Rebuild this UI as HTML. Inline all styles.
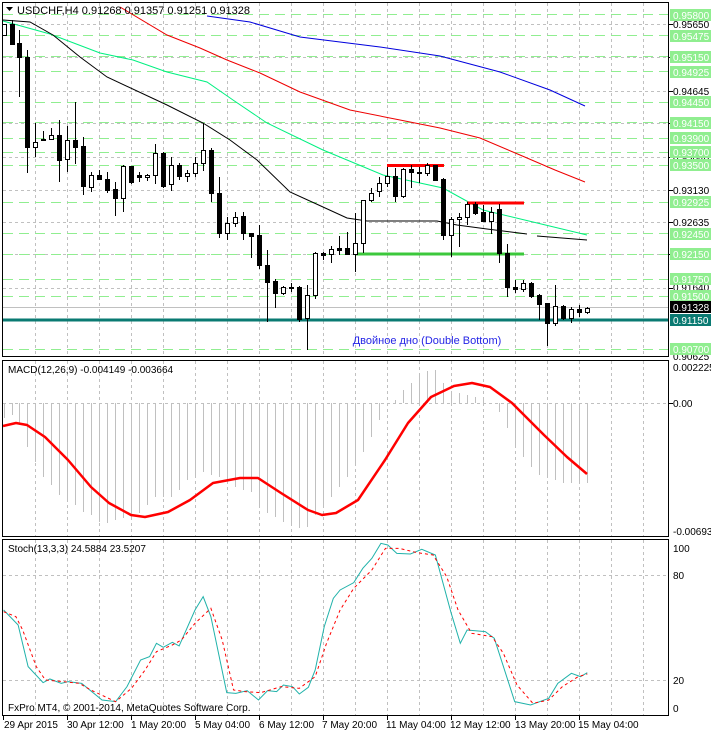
<!DOCTYPE html>
<html><head><meta charset="utf-8"><style>
html,body{margin:0;padding:0;background:#fff;}
svg{display:block;font-family:"Liberation Sans",sans-serif;font-size:11px;}
</style></head><body>
<svg width="711" height="733" viewBox="0 0 711 733" xmlns="http://www.w3.org/2000/svg">
<rect width="711" height="733" fill="#fff"/>
<g stroke="#c0c0c0" stroke-dasharray="3,3" shape-rendering="crispEdges">
<path d="M35.5 3V356M67.5 3V356M99.5 3V356M131.5 3V356M163.5 3V356M195.5 3V356M227.5 3V356M259.5 3V356M291.5 3V356M323.5 3V356M355.5 3V356M387.5 3V356M419.5 3V356M451.5 3V356M483.5 3V356M515.5 3V356M547.5 3V356M579.5 3V356M611.5 3V356M643.5 3V356"/>
<path d="M35.5 361V537M67.5 361V537M99.5 361V537M131.5 361V537M163.5 361V537M195.5 361V537M227.5 361V537M259.5 361V537M291.5 361V537M323.5 361V537M355.5 361V537M387.5 361V537M419.5 361V537M451.5 361V537M483.5 361V537M515.5 361V537M547.5 361V537M579.5 361V537M611.5 361V537M643.5 361V537"/>
<path d="M35.5 540V715M67.5 540V715M99.5 540V715M131.5 540V715M163.5 540V715M195.5 540V715M227.5 540V715M259.5 540V715M291.5 540V715M323.5 540V715M355.5 540V715M387.5 540V715M419.5 540V715M451.5 540V715M483.5 540V715M515.5 540V715M547.5 540V715M579.5 540V715M611.5 540V715M643.5 540V715"/>
<path d="M3 24.5H669M3 57.5H669M3 91.5H669M3 123.5H669M3 157.5H669M3 190.5H669M3 222.5H669M3 254.5H669M3 288.5H669"/>
<path d="M3 403.5H669M3 575.5H669M3 680.5H669"/>
</g>
<g stroke="#90ee90" stroke-dasharray="10,6" shape-rendering="crispEdges">
<path d="M3 14.5H669M3 35.5H669M3 56.5H669M3 71.5H669M3 102.5H669M3 122.5H669M3 138.5H669M3 152.5H669M3 165.5H669M3 202.5H669M3 233.5H669M3 254.5H669M3 279.5H669M3 296.5H669M3 349.5H669"/>
</g>
<path d="M3 307.5H669" stroke="#c0c0c0" shape-rendering="crispEdges"/>
<g fill="none" stroke-width="1">
<polyline stroke="#0000dd" points="207,16 250,22 300,37 380,47 440,56 500,72 550,90 585,106"/>
<polyline stroke="#ee0000" points="120,7 167,35 200,48 227,60 260,73 300,92 350,110 400,120 440,128 480,138 520,155 555,170 585,182"/>
<polyline stroke="#00f080" points="3,21 50,34 100,53 133,60 167,72 207,82 233,100 267,123 323,150 383,175 443,188 483,210 533,222 587,235"/>
<polyline stroke="#000" points="3,20 30,22 53,35 80,57 107,77 167,105 203,123 230,140 257,160 290,192 323,207 347,218 367,221 437,221 457,225 487,229 527,234"/>
<polyline stroke="#000" points="537,236 587,240"/>
</g>
<path d="M3 320H669" stroke="#0a7a72" stroke-width="3"/>
<path d="M387 165.5H444" stroke="#ff0000" stroke-width="3"/>
<path d="M467 203H524" stroke="#ff0000" stroke-width="3"/>
<path d="M355 254H524" stroke="#3cc83c" stroke-width="3"/>
<g stroke="#000" shape-rendering="crispEdges">
<path d="M4.5 24V35M12.5 20V44M19.5 30V97M27.5 50V173M35.5 123V157M43.5 131V140M51.5 128V140M59.5 120V182M67.5 126V172M75.5 102V164M83.5 137V195M91.5 172V192M99.5 170V180M107.5 172V193M115.5 182V216M123.5 165V212M131.5 166V184M139.5 172V182M147.5 174V181M155.5 144V184M163.5 152V188M171.5 157V191M179.5 163V180M187.5 170V182M195.5 157V177M203.5 123V171M211.5 148V202M219.5 177V238M227.5 217V240M235.5 212V227M243.5 212V240M251.5 233V258M259.5 225V269M267.5 250V322M275.5 279V308M283.5 286V295M291.5 283V292M299.5 286V322M307.5 285V350M315.5 252V299M323.5 252V260M331.5 246V263M339.5 236V255M347.5 232V255M355.5 213V272M363.5 200V253M371.5 188V202M379.5 177V197M387.5 167V187M395.5 168V202M403.5 168V198M411.5 165V188M419.5 167V183M427.5 163V176M435.5 165V181M443.5 178V240M451.5 217V257M459.5 213V247M467.5 202V225M475.5 202V215M483.5 205V222M491.5 207V234M499.5 204V263M507.5 244V297M515.5 280V293M523.5 280V292M531.5 282V298M539.5 294V320M547.5 303V346M555.5 285V326M563.5 305V320M571.5 307V323M579.5 305V317M587.5 307V314"/>
<g fill="#fff">
<rect x="2.5" y="24.5" width="4" height="11"/><rect x="33.5" y="142.5" width="4" height="5"/><rect x="49.5" y="135.5" width="4" height="4"/><rect x="65.5" y="140.5" width="4" height="19"/><rect x="89.5" y="175.5" width="4" height="12"/><rect x="121.5" y="166.5" width="4" height="32"/><rect x="145.5" y="175.5" width="4" height="2"/><rect x="153.5" y="153.5" width="4" height="22"/><rect x="169.5" y="165.5" width="4" height="19"/><rect x="185.5" y="173.5" width="4" height="3"/><rect x="193.5" y="163.5" width="4" height="10"/><rect x="201.5" y="150.5" width="4" height="13"/><rect x="225.5" y="223.5" width="4" height="10"/><rect x="233.5" y="217.5" width="4" height="6"/><rect x="281.5" y="287.5" width="4" height="6"/><rect x="305.5" y="295.5" width="4" height="23"/><rect x="313.5" y="253.5" width="4" height="42"/><rect x="329.5" y="249.5" width="4" height="5"/><rect x="353.5" y="243.5" width="4" height="11"/><rect x="361.5" y="200.5" width="4" height="43"/><rect x="369.5" y="193.5" width="4" height="7"/><rect x="377.5" y="183.5" width="4" height="8"/><rect x="385.5" y="176.5" width="4" height="7"/><rect x="401.5" y="169.5" width="4" height="27"/><rect x="425.5" y="165.5" width="4" height="8"/><rect x="449.5" y="219.5" width="4" height="16"/><rect x="457.5" y="217.5" width="4" height="2"/><rect x="465.5" y="204.5" width="4" height="13"/><rect x="489.5" y="212.5" width="4" height="9"/><rect x="521.5" y="283.5" width="4" height="6"/><rect x="553.5" y="306.5" width="4" height="17"/><rect x="569.5" y="309.5" width="4" height="9"/><rect x="585.5" y="308.5" width="4" height="4"/>
</g>
<g fill="#000">
<rect x="10.5" y="24.5" width="4" height="20"/><rect x="17.5" y="43.5" width="4" height="14"/><rect x="25.5" y="57.5" width="4" height="90"/><rect x="41.5" y="139.5" width="4" height="1"/><rect x="57.5" y="135.5" width="4" height="25"/><rect x="73.5" y="140.5" width="4" height="7"/><rect x="81.5" y="146.5" width="4" height="40"/><rect x="97.5" y="175.5" width="4" height="4"/><rect x="105.5" y="179.5" width="4" height="11"/><rect x="113.5" y="189.5" width="4" height="9"/><rect x="129.5" y="166.5" width="4" height="16"/><rect x="137.5" y="175.5" width="4" height="2"/><rect x="161.5" y="153.5" width="4" height="33"/><rect x="177.5" y="165.5" width="4" height="11"/><rect x="209.5" y="150.5" width="4" height="43"/><rect x="217.5" y="193.5" width="4" height="40"/><rect x="241.5" y="216.5" width="4" height="17"/><rect x="249.5" y="233.5" width="4" height="3"/><rect x="257.5" y="235.5" width="4" height="30"/><rect x="265.5" y="265.5" width="4" height="17"/><rect x="273.5" y="281.5" width="4" height="12"/><rect x="289.5" y="287.5" width="4" height="1"/><rect x="297.5" y="287.5" width="4" height="32"/><rect x="321.5" y="253.5" width="4" height="2"/><rect x="337.5" y="248.5" width="4" height="2"/><rect x="345.5" y="248.5" width="4" height="6"/><rect x="393.5" y="176.5" width="4" height="20"/><rect x="409.5" y="169.5" width="4" height="3"/><rect x="417.5" y="172.5" width="4" height="1"/><rect x="433.5" y="165.5" width="4" height="15"/><rect x="441.5" y="179.5" width="4" height="56"/><rect x="473.5" y="204.5" width="4" height="9"/><rect x="481.5" y="212.5" width="4" height="9"/><rect x="497.5" y="209.5" width="4" height="44"/><rect x="505.5" y="253.5" width="4" height="34"/><rect x="513.5" y="287.5" width="4" height="2"/><rect x="529.5" y="283.5" width="4" height="13"/><rect x="537.5" y="295.5" width="4" height="9"/><rect x="545.5" y="303.5" width="4" height="20"/><rect x="561.5" y="306.5" width="4" height="12"/><rect x="577.5" y="309.5" width="4" height="3"/>
</g>
</g>
<text x="427" y="344" fill="#2424e6" text-anchor="middle">Двойное дно (Double Bottom)</text>
<path d="M6 7h7l-3.5 4z" fill="#000"/>
<text x="17" y="14" fill="#000">USDCHF,H4  0.91268 0.91357 0.91251 0.91328</text>
<g stroke="#c0c0c0" shape-rendering="crispEdges">
<path d="M4.5 403V418M12.5 403V415M19.5 403V425M27.5 403V447M35.5 403V462M43.5 403V477M51.5 403V485M59.5 403V495M67.5 403V500M75.5 403V505M83.5 403V512M91.5 403V515M99.5 403V522M107.5 403V523M115.5 403V520M123.5 403V518M131.5 403V517M139.5 403V513M147.5 403V505M155.5 403V497M163.5 403V497M171.5 403V497M179.5 403V490M187.5 403V480M195.5 403V475M203.5 403V472M211.5 403V475M219.5 403V477M227.5 403V482M235.5 403V487M243.5 403V490M251.5 403V492M259.5 403V505M267.5 403V513M275.5 403V517M283.5 403V522M291.5 403V526M299.5 403V528M307.5 403V527M315.5 403V515M323.5 403V507M331.5 403V497M339.5 403V487M347.5 403V477M355.5 403V465M363.5 403V452M371.5 403V437M379.5 403V420M387.5 403V406M395.5 403V400M403.5 403V390M411.5 403V383M419.5 403V375M427.5 403V371M435.5 403V370M443.5 403V383M451.5 403V393M459.5 403V393M467.5 403V395M475.5 403V397M483.5 403V400M491.5 403V404M499.5 403V412M507.5 403V428M515.5 403V448M523.5 403V457M531.5 403V467M539.5 403V475M547.5 403V478M555.5 403V480M563.5 403V483M571.5 403V483M579.5 403V483M587.5 403V483"/>
</g>
<polyline fill="none" stroke="#ff0000" stroke-width="2.5" stroke-linejoin="round" points="3,426 16,423 27,425 45,437 68,460 91,487 109,503 131,515 145,517 168,512 190,500 213,483 240,478 258,478 281,493 308,510 322,515 336,513 358,500 385,460 408,423 431,397 454,386 472,383 490,387 512,403 544,435 567,457 587,474"/>
<text x="8" y="373" fill="#000" font-size="10">MACD(12,26,9) -0.004149 -0.003664</text>
<g transform="translate(0,530) scale(0.4535,0.3333)" fill="none">
<polyline vector-effect="non-scaling-stroke" stroke="#20b2aa" stroke-width="1" points="8,240 40,285 62,410 95,458 110,447 135,460 150,455 180,460 225,510 255,515 280,470 310,390 330,380 345,340 360,352 380,337 395,348 430,240 448,200 465,260 500,488 520,490 545,482 570,510 590,482 610,485 625,465 645,470 660,492 680,472 695,420 715,290 735,205 750,180 780,158 800,115 820,85 840,40 855,45 875,70 905,72 930,58 960,75 995,250 1015,340 1030,300 1070,305 1090,325 1135,515 1170,525 1210,505 1230,460 1260,430 1280,440 1295,428"/>
<polyline vector-effect="non-scaling-stroke" stroke="#ff0000" stroke-width="1" stroke-dasharray="3,3" points="8,245 35,260 50,300 80,410 100,450 140,455 175,460 200,480 255,515 290,475 320,420 345,365 380,345 400,330 430,280 465,235 490,330 515,480 540,485 575,488 620,470 660,475 695,440 720,340 750,240 780,175 820,120 850,55 880,55 920,68 955,75 985,140 1010,240 1040,310 1085,320 1110,370 1140,465 1175,520 1210,510 1240,470 1275,440 1295,432"/>
</g>
<text x="8" y="552" fill="#000" font-size="10">Stoch(13,3,3) 24.5884 23.5207</text>
<text x="8" y="711" fill="#000" font-size="10">FxPro MT4, © 2001-2014, MetaQuotes Software Corp.</text>
<g fill="none" stroke="#000" shape-rendering="crispEdges">
<rect x="2.5" y="2.5" width="666" height="354"/>
<rect x="2.5" y="360.5" width="666" height="176"/>
<rect x="2.5" y="539.5" width="666" height="176"/>
<path d="M3.5 716V720M67.5 716V720M131.5 716V720M195.5 716V720M259.5 716V720M323.5 716V720M387.5 716V720M451.5 716V720M515.5 716V720M579.5 716V720"/>
<path d="M669 24.5H673M669 57.5H673M669 91.5H673M669 123.5H673M669 157.5H673M669 190.5H673M669 222.5H673M669 254.5H673M669 288.5H673M669 403.5H673"/>
</g>
<g font-size="10">
<text x="673" y="28" fill="#000">0.95650</text>
<text x="673" y="95" fill="#000">0.94645</text>
<text x="673" y="161" fill="#000">0.93640</text>
<text x="673" y="194" fill="#000">0.93130</text>
<text x="673" y="226" fill="#000">0.92635</text>
<text x="673" y="291" fill="#000">0.91640</text>
<text x="673" y="360" fill="#000">0.90625</text>
<g fill="#90ee90">
<rect x="670" y="9" width="41" height="12"/><rect x="670" y="30" width="41" height="12"/><rect x="670" y="51" width="41" height="12"/><rect x="670" y="66" width="41" height="12"/><rect x="670" y="96" width="41" height="12"/><rect x="670" y="117" width="41" height="12"/><rect x="670" y="132" width="41" height="12"/><rect x="670" y="146" width="41" height="12"/><rect x="670" y="159" width="41" height="12"/><rect x="670" y="196" width="41" height="12"/><rect x="670" y="228" width="41" height="12"/><rect x="670" y="248" width="41" height="12"/><rect x="670" y="273" width="41" height="12"/><rect x="670" y="290" width="41" height="12"/><rect x="670" y="343" width="41" height="12"/>
</g>
<rect x="670" y="301" width="41" height="12" fill="#000"/>
<rect x="670" y="314" width="41" height="12" fill="#0a7a72"/>
<g fill="#fff">
<text x="673" y="19">0.95800</text><text x="673" y="40">0.95475</text><text x="673" y="61">0.95150</text><text x="673" y="76">0.94925</text><text x="673" y="106">0.94450</text><text x="673" y="127">0.94150</text><text x="673" y="142">0.93900</text><text x="673" y="156">0.93700</text><text x="673" y="169">0.93500</text><text x="673" y="206">0.92925</text><text x="673" y="238">0.92450</text><text x="673" y="258">0.92150</text><text x="673" y="283">0.91750</text><text x="673" y="300">0.91500</text><text x="673" y="311">0.91328</text><text x="673" y="324">0.91150</text><text x="673" y="353">0.90700</text>
</g>
<text x="673" y="371" fill="#000">0.002225</text>
<text x="673" y="407" fill="#000">0.00</text>
<text x="673" y="535" fill="#000">-0.006938</text>
<text x="673" y="552" fill="#000">100</text>
<text x="673" y="579" fill="#000">80</text>
<text x="673" y="684" fill="#000">20</text>
<text x="673" y="712" fill="#000">0</text>
</g>
<g fill="#000" font-size="10">
<text x="4" y="728">29 Apr 2015</text>
<text x="67" y="728">30 Apr 12:00</text>
<text x="131" y="728">1 May 20:00</text>
<text x="195" y="728">5 May 04:00</text>
<text x="259" y="728">6 May 12:00</text>
<text x="322" y="728">7 May 20:00</text>
<text x="386" y="728">11 May 04:00</text>
<text x="450" y="728">12 May 12:00</text>
<text x="515" y="728">13 May 20:00</text>
<text x="578" y="728">15 May 04:00</text>
</g>
</svg>
</body></html>
